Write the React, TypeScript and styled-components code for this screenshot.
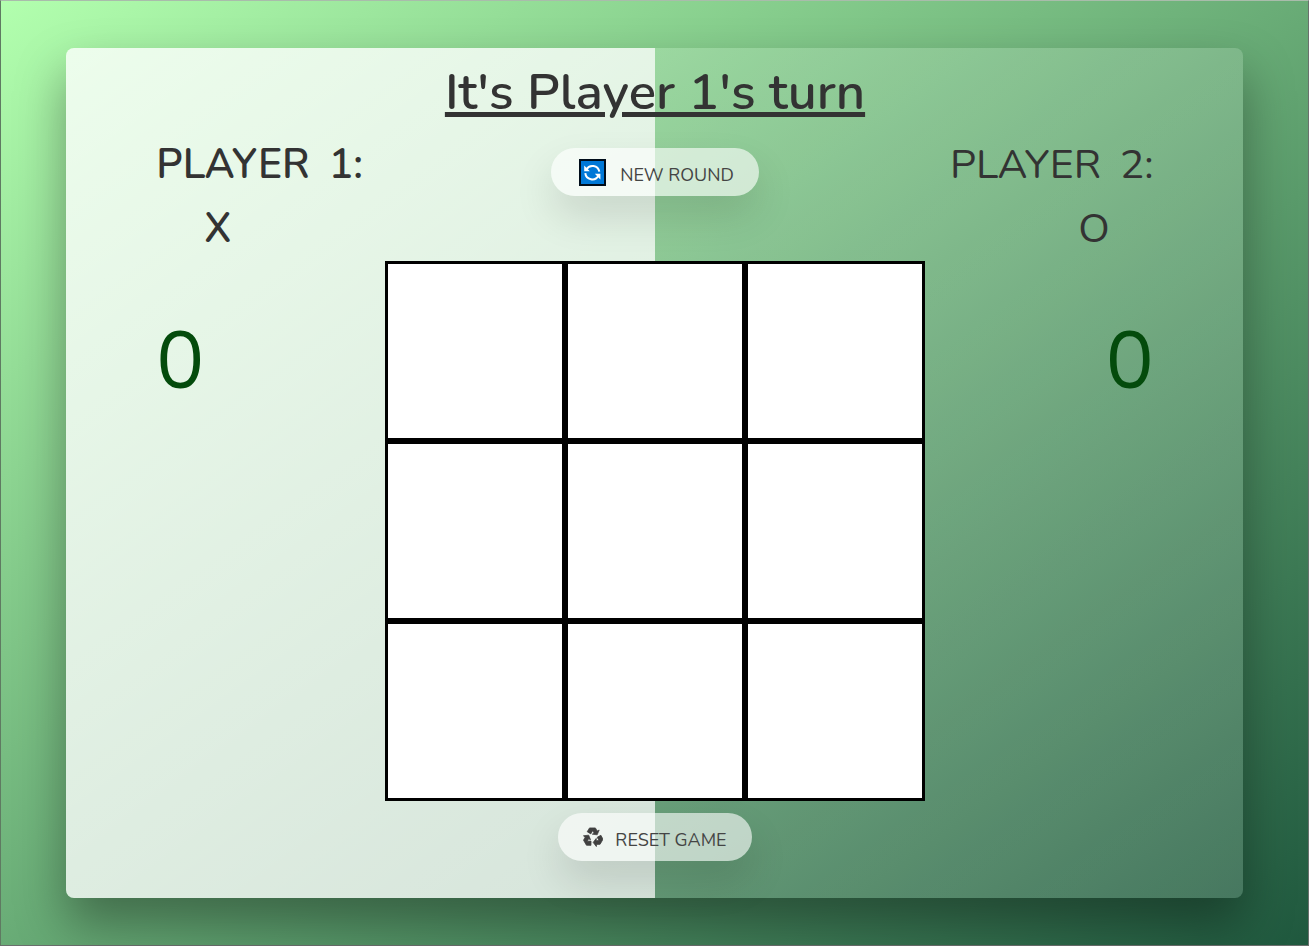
import { useState } from "react";
import styled, { createGlobalStyle } from "styled-components";

const GlobalStyle = createGlobalStyle`
  *, *::before, *::after { box-sizing: border-box; }
  body {
    margin: 0;
    color: #333;
    font-family: Nunito, Lato, "Open Sans", sans-serif;
  }
`;

const Page = styled.div`
  display: flex;
  align-items: center;
  justify-content: center;
  min-height: 100vh;
  border: 1px solid;
  border-color: #a9bcab #6b6f6d #6b6f6d #5f7a62;
  background: linear-gradient(to bottom right, #b2ffae, #1f583e) padding-box;
`;

const Card = styled.main`
  width: 90%;
  min-height: calc(90vh - 2px);
  padding: 13px 89px 24px 90px;
  border-radius: 8px;
  background: linear-gradient(
    to right,
    rgba(255, 255, 255, 0.78) 50%,
    rgba(255, 255, 255, 0.15) 50%
  );
  box-shadow: 0 25px 50px rgba(0, 0, 0, 0.36);
`;

const Title = styled.h1`
  margin: 0 0 25px;
  font-size: 51px;
  font-weight: 600;
  line-height: 62px;
  text-align: center;
  text-decoration: underline;
`;

const Table = styled.div`
  display: grid;
  grid-template-columns: 1fr auto 1fr;
`;

const Player = styled.section<{ $side: "left" | "right" }>`
  width: 0;
  padding-top: 1px;
  justify-self: ${(p) => (p.$side === "left" ? "start" : "end")};
  display: flex;
  flex-direction: column;
  align-items: ${(p) => (p.$side === "left" ? "flex-start" : "flex-end")};
  white-space: nowrap;
`;

const Name = styled.h2<{ $active: boolean }>`
  margin: 0;
  padding-bottom: 16px;
  font-size: 41px;
  font-weight: ${(p) => (p.$active ? 600 : 400)};
  line-height: 32px;
  text-transform: uppercase;
`;

const Num = styled.span`
  margin-left: 8px;
`;

const Mark = styled.p<{ $active: boolean }>`
  margin: 0;
  padding: 16px 44px 0 48px;
  font-size: 41px;
  font-weight: ${(p) => (p.$active ? 600 : 400)};
  line-height: 32px;
`;

const Score = styled.output`
  padding-top: 69px;
  color: #044b0c;
  font-size: 80px;
  line-height: 96px;
`;

const Center = styled.div`
  display: flex;
  flex-direction: column;
  align-items: center;
`;

const Board = styled.div`
  display: grid;
  grid-template-columns: repeat(3, 180px);
  grid-auto-rows: 180px;
  margin: 65px 0 12px;
`;

const Cell = styled.button`
  padding: 0;
  border: 3px solid #000;
  background: #fff;
  color: #333;
  font: inherit;
  font-size: 80px;
  cursor: pointer;
`;

const PillButton = styled.button`
  display: flex;
  align-items: center;
  height: 48px;
  gap: 12px;
  padding: 0 25px;
  border: 0;
  border-radius: 24px;
  background: rgba(255, 255, 255, 0.6);
  box-shadow: 0 20px 40px rgba(0, 0, 0, 0.12);
  color: #444;
  font: inherit;
  font-size: 18px;
  text-transform: uppercase;
  cursor: pointer;
`;

const Label = styled.span`
  padding-top: 5px;
`;

function RoundIcon() {
  return (
    <svg width="32" height="27" viewBox="-3 0 32 27" aria-hidden="true">
      <rect width="27" height="27" fill="#000d1a" />
      <rect x="2" y="2" width="23" height="23" fill="#0078d7" />
      <g fill="none" stroke="#fff" strokeWidth="2">
        <path d="M7.4 10.4A7 7 0 0 1 20.3 12.6" />
        <path d="M6.3 14.2A7 7 0 0 0 19.4 16.8" />
      </g>
      <path d="M5.2 6.6V12.2H10.8Z M21.4 20.4V14.8H15.8Z" fill="#fff" />
    </svg>
  );
}

function RecycleIcon() {
  const arm =
    "M6.2 1H12.6L14.7 4.4L16.8 3.3L14.6 8.6L9.2 7.9L11.2 6.6L9.6 4L7.6 7.6L3.6 5.2Z";
  return (
    <svg
      width="20"
      height="22"
      viewBox="-1 -1 22 24"
      fill="#404040"
      stroke="#404040"
      strokeWidth="0.8"
      strokeLinejoin="round"
      aria-hidden="true"
    >
      {[0, 120, 240].map((angle) => (
        <path key={angle} d={arm} transform={`rotate(${angle} 10 11.5)`} />
      ))}
    </svg>
  );
}

const LINES = [
  [0, 1, 2], [3, 4, 5], [6, 7, 8],
  [0, 3, 6], [1, 4, 7], [2, 5, 8],
  [0, 4, 8], [2, 4, 6],
];

const EMPTY: string[] = Array(9).fill("");

export default function App() {
  const [cells, setCells] = useState(EMPTY);
  const [turn, setTurn] = useState(0);
  const [scores, setScores] = useState([0, 0]);

  const won = (b: string[]) =>
    LINES.some(([a, c, d]) => b[a] && b[a] === b[c] && b[a] === b[d]);

  const play = (index: number) => {
    if (cells[index] || won(cells)) return;
    const next = cells.map((c, i) => (i === index ? "XO"[turn] : c));
    setCells(next);
    if (won(next)) setScores(scores.map((s, i) => (i === turn ? s + 1 : s)));
    else setTurn(1 - turn);
  };

  const newRound = () => {
    setCells(EMPTY);
    setTurn(0);
  };

  const resetGame = () => {
    newRound();
    setScores([0, 0]);
  };

  return (
    <>
      <GlobalStyle />
      <Page>
        <Card>
          <Title>{`It's Player ${turn + 1}'s turn`}</Title>
          <Table>
            <Player $side="left">
              <Name $active={turn === 0}>
                Player <Num>1:</Num>
              </Name>
              <Mark $active={turn === 0}>X</Mark>
              <Score>{scores[0]}</Score>
            </Player>
            <Center>
              <PillButton type="button" onClick={newRound}>
                <RoundIcon />
                <Label>New round</Label>
              </PillButton>
              <Board>
                {cells.map((value, i) => (
                  <Cell
                    key={i}
                    type="button"
                    aria-label={`Square ${i + 1}`}
                    onClick={() => play(i)}
                  >
                    {value}
                  </Cell>
                ))}
              </Board>
              <PillButton type="button" onClick={resetGame}>
                <RecycleIcon />
                <Label>Reset game</Label>
              </PillButton>
            </Center>
            <Player $side="right">
              <Name $active={turn === 1}>
                Player <Num>2:</Num>
              </Name>
              <Mark $active={turn === 1}>O</Mark>
              <Score>{scores[1]}</Score>
            </Player>
          </Table>
        </Card>
      </Page>
    </>
  );
}
